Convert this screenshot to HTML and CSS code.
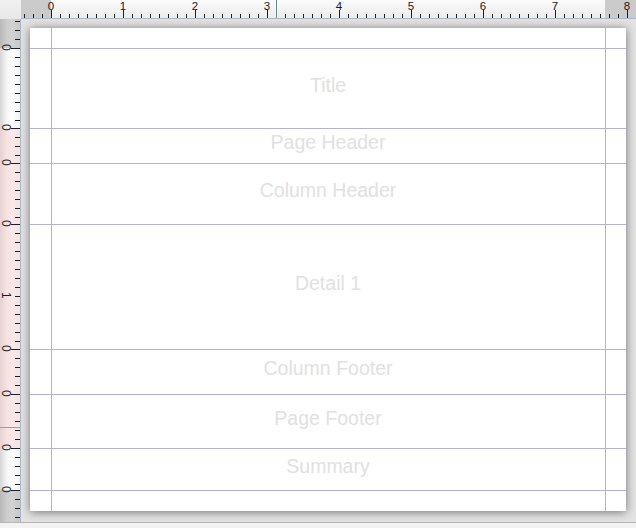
FILE: index.html
```html
<!DOCTYPE html>
<html>
<head>
<meta charset="utf-8">
<link rel="stylesheet" href="styles.css">
</head>
<body>
<div class="app">
  <div class="corner"></div>
  <div class="hruler">
    <span class="hnum first">0</span>
    <span class="hnum">1</span>
    <span class="hnum">2</span>
    <span class="hnum">3</span>
    <span class="hnum">4</span>
    <span class="hnum">5</span>
    <span class="hnum">6</span>
    <span class="hnum">7</span>
    <span class="hnum">8</span>
    <div class="hcursor"></div>
  </div>
  <div class="vruler">
    <div class="seg seg-top"></div>
    <div class="seg tone-white h-title"><span class="vnum">0</span></div>
    <div class="seg tone-pink h-ph"><span class="vnum">0</span></div>
    <div class="seg tone-pink h-ch"><span class="vnum">0</span></div>
    <div class="seg tone-pink h-detail"><span class="vnum">0</span><span class="vnum one">1</span></div>
    <div class="seg tone-pink h-cf"><span class="vnum">0</span></div>
    <div class="seg tone-pink h-pf"><span class="vnum">0</span></div>
    <div class="seg tone-white h-sum"><span class="vnum">0</span></div>
    <div class="seg tone-gray seg-bottom"><span class="vnum">0</span></div>
    <div class="vcursor"></div>
  </div>
  <div class="canvas">
    <div class="page">
      <div class="band h-title">Title</div>
      <div class="band h-ph">Page Header</div>
      <div class="band h-ch">Column Header</div>
      <div class="band h-detail">Detail 1</div>
      <div class="band h-cf">Column Footer</div>
      <div class="band h-pf">Page Footer</div>
      <div class="band h-sum">Summary</div>
      <div class="band band-end"></div>
    </div>
  </div>
</div>
<div class="footer"></div>
</body>
</html>
```
FILE: styles.css
```css
* { box-sizing: border-box; }
html, body { margin: 0; padding: 0; }
body {
  width: 636px;
  height: 528px;
  overflow: hidden;
  background: #f2f2f2;
  font-family: "Liberation Sans", Arial, sans-serif;
}
.app {
  display: grid;
  grid-template-columns: 21px 615px;
  grid-template-rows: 19px 503px;
  height: 522px;
}
.footer {
  height: 6px;
  border-top: 1px solid #b6b6b6;
  background: #f3f3f3;
}
.corner {
  background: linear-gradient(#f1f1f1, #e7e7e7);
}

/* horizontal ruler */
.hruler {
  position: relative;
  display: flex;
  align-items: flex-start;
  overflow: hidden;
  border-bottom: 1px solid #a9b8c8;
  background-image:
    linear-gradient(to right, #1f1f1f 1px, transparent 1px),
    linear-gradient(to right, #1f1f1f 1px, transparent 1px),
    linear-gradient(to right, #cbcbcb 0 30px, transparent 30px 584px, #cbcbcb 584px),
    linear-gradient(#fbfbfb, #ececec);
  background-size: 72px 8px, 9px 4px, 100% 100%, 100% 100%;
  background-position: 30px bottom, 3px bottom, 0 0, 0 0;
  background-repeat: repeat-x, repeat-x, no-repeat, no-repeat;
}
.hnum {
  flex: 0 0 72px;
  text-align: center;
  font-size: 11.5px;
  line-height: 12px;
  color: #1a1a1a;
}
.hnum.first { margin-left: -6px; }
.hcursor {
  position: absolute;
  left: 255px;
  top: 0;
  bottom: 0;
  width: 1px;
  background: #6d8b88;
}

/* vertical ruler */
.vruler {
  position: relative;
  display: flex;
  flex-direction: column;
  border-right: 1px solid #a9b8c8;
  background: #f4f4f4;
}
.seg {
  position: relative;
  flex: 0 0 auto;
  --tone: linear-gradient(to right, #d6d6d6, #f7f7f7 35%, #ffffff 60%, #f1f1f1);
  background-image:
    linear-gradient(#1f1f1f, #1f1f1f),
    linear-gradient(to bottom, #1f1f1f 1px, transparent 1px),
    var(--tone);
  background-size: 9px 1px, 5px 9px, 100% 100%;
  background-position: right top, right top, 0 0;
  background-repeat: no-repeat, repeat-y, no-repeat;
}
.tone-pink {
  --tone: linear-gradient(to right, #e6d2d2, #f8e2e2 35%, #fbe8e8 60%, #f3e3e3);
}
.tone-gray {
  --tone: linear-gradient(to right, #b9b9b9, #cdcdcd 35%, #d2d2d2 60%, #c9c9c9);
}
.seg-top {
  height: 29px;
  background-image:
    linear-gradient(to bottom, #1f1f1f 1px, transparent 1px),
    linear-gradient(to right, #b9b9b9, #cdcdcd 35%, #d2d2d2 60%, #c9c9c9);
  background-size: 5px 9px, 100% 100%;
  background-position: right bottom, 0 0;
  background-repeat: repeat-y, no-repeat;
}
.seg-bottom { flex: 1 1 auto; }
.vnum {
  position: absolute;
  left: 0;
  top: -4px;
  width: 12px;
  writing-mode: vertical-rl;
  font-size: 12px;
  line-height: 12px;
  color: #1a1a1a;
}
.vnum.one { top: 68px; }
.vcursor {
  position: absolute;
  left: 0;
  right: 0;
  top: 408px;
  height: 1px;
  background: #93a3ab;
}

/* canvas & page */
.canvas {
  padding: 9px 10px 11px 9px;
  background: #e3e3e3;
  overflow: hidden;
}
.page {
  width: 596px;
  height: 483px;
  padding-top: 20px;
  display: flex;
  flex-direction: column;
  background:
    linear-gradient(#b5b1d4, #b5b1d4) 21px 0 / 1px 100% no-repeat,
    linear-gradient(#b5b1d4, #b5b1d4) 575px 0 / 1px 100% no-repeat,
    #ffffff;
  box-shadow: 0 1px 9px rgba(0, 0, 0, 0.5);
}
.band {
  flex: 0 0 auto;
  border-top: 1px solid #b5b1d4;
  display: flex;
  align-items: center;
  justify-content: center;
  padding-bottom: 7px;
  font-size: 19.5px;
  color: #e1e1e1;
}
.band-end { flex: 1 1 auto; }

.h-title { height: 80px; }
.h-ph { height: 35px; }
.h-ch { height: 61px; }
.h-detail { height: 125px; }
.h-cf { height: 45px; }
.h-pf { height: 54px; }
.h-sum { height: 42px; }
```
